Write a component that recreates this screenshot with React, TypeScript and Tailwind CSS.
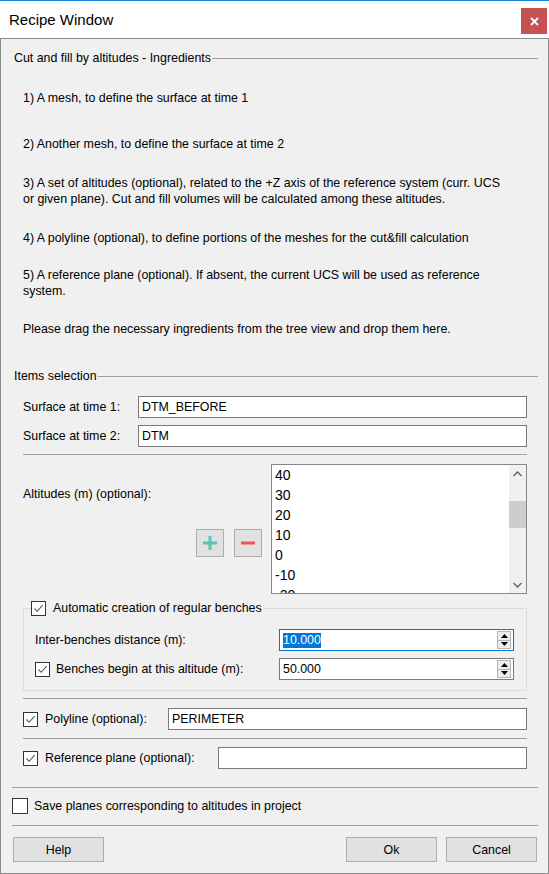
import React from "react";

function CheckBox({ big = false, checked = true }: { big?: boolean; checked?: boolean }) {
  return (
    <span
      className={
        big
          ? "inline-flex w-[16px] h-[16px] border border-[#333333] bg-white items-center justify-center shrink-0"
          : "inline-flex w-[15px] h-[15px] border border-[#333333] bg-white items-center justify-center shrink-0"
      }
    >
      {checked && (
        <svg width="11" height="11" viewBox="0 0 11 11">
          <path d="M1.5 5.5 L4.2 8.3 L9.6 2.2" fill="none" stroke="#555" strokeWidth="1.1" />
        </svg>
      )}
    </span>
  );
}

function Sep() {
  return <div className="h-px bg-[#a0a0a0]" />;
}

function TextInput({ value }: { value: string }) {
  return (
    <div className="flex-1 h-[22px] border border-[#7a7a7a] bg-white flex items-center pl-[3px] leading-[16px]">
      {value}
    </div>
  );
}

function SpinArrows() {
  return (
    <div className="flex flex-col w-[14px] h-[18px] mr-[2px]">
      <div className="flex-1 border border-[#b4b4b4] bg-[#ececec] flex items-center justify-center">
        <svg width="7" height="4" viewBox="0 0 7 4">
          <path d="M0 4 L3.5 0 L7 4 Z" fill="#000" />
        </svg>
      </div>
      <div className="flex-1 border border-t-0 border-[#b4b4b4] bg-[#ececec] flex items-center justify-center">
        <svg width="7" height="4" viewBox="0 0 7 4">
          <path d="M0 0 L3.5 4 L7 0 Z" fill="#000" />
        </svg>
      </div>
    </div>
  );
}

export default function App() {
  const altitudes = ["40", "30", "20", "10", "0", "-10", "-20"];
  return (
    <div className="w-[549px] h-[874px] bg-white border-t border-[#1883d7] flex flex-col font-['Liberation_Sans',Arial,sans-serif] text-black">
      {/* Title bar */}
      <div className="h-[37px] flex items-start justify-between">
        <div className="pl-[9px] pt-[9px] text-[15px] leading-[20px] text-[#000]">Recipe Window</div>
        <div className="mt-[7px] mr-[2px] w-[26px] h-[26px] bg-[#c75050] flex items-center justify-center">
          <svg width="9" height="9" viewBox="0 0 9 9">
            <path d="M1 1 L8 8 M8 1 L1 8" stroke="#fff" strokeWidth="1.8" />
          </svg>
        </div>
      </div>

      {/* Client area */}
      <div className="h-[836px] border border-[#8a8a8a] bg-[#f0f0f0] pl-[11px] pr-[10px] flex flex-col text-[12.4px] leading-[16px]">
        {/* Ingredients group title */}
        <div className="mt-[11px] pl-[2px] flex items-center h-[16px]">
          <span>Cut and fill by altitudes - Ingredients</span>
          <div className="flex-1 h-px bg-[#a0a0a0] ml-[1px]" />
        </div>
        <div className="pl-[11px] flex flex-col">
          <p className="mt-[24px]">1) A mesh, to define the surface at time 1</p>
          <p className="mt-[30px]">2) Another mesh, to define the surface at time 2</p>
          <p className="mt-[23px]">
            3) A set of altitudes (optional), related to the +Z axis of the reference system (curr. UCS
            <br />
            or given plane). Cut and fill volumes will be calculated among these altitudes.
          </p>
          <p className="mt-[23px]">4) A polyline (optional), to define portions of the meshes for the cut&amp;fill calculation</p>
          <p className="mt-[21px]">
            5) A reference plane (optional). If absent, the current UCS will be used as reference
            <br />
            system.
          </p>
          <p className="mt-[22px]">Please drag the necessary ingredients from the tree view and drop them here.</p>
        </div>

        {/* Items selection title */}
        <div className="mt-[31px] pl-[2px] flex items-center h-[16px]">
          <span>Items selection</span>
          <div className="flex-1 h-px bg-[#a0a0a0] ml-[1px]" />
        </div>

        <div className="pl-[11px] pr-[11px] flex flex-col">
          <div className="mt-[12px] flex items-center">
            <span className="w-[115px]">Surface at time 1:</span>
            <TextInput value="DTM_BEFORE" />
          </div>
          <div className="mt-[7px] flex items-center">
            <span className="w-[115px]">Surface at time 2:</span>
            <TextInput value="DTM" />
          </div>
          <div className="mt-[7px]">
            <Sep />
          </div>

          {/* Altitudes */}
          <div className="mt-[9px] flex h-[130px]">
            <div className="flex-1 flex flex-col">
              <span className="mt-[22px]">Altitudes (m) (optional):</span>
              <div className="mt-[27px] flex justify-end gap-[10px] pr-[9px]">
                <div className="w-[28px] h-[28px] border border-[#adadad] bg-[#e1e1e1] flex items-center justify-center">
                  <svg width="16" height="16" viewBox="0 0 16 16">
                    <path d="M8 1 V15 M1 8 H15" stroke="#5bc4b6" strokeWidth="3" />
                  </svg>
                </div>
                <div className="w-[28px] h-[28px] border border-[#adadad] bg-[#e1e1e1] flex items-center justify-center">
                  <svg width="14" height="4" viewBox="0 0 14 4">
                    <path d="M0 2 H14" stroke="#f05454" strokeWidth="3" />
                  </svg>
                </div>
              </div>
            </div>
            <div className="w-[256px] h-[130px] border border-[#828790] bg-white flex overflow-hidden">
              <div className="flex-1 flex flex-col pl-[3px] text-[14px] leading-[20px] overflow-hidden">
                {altitudes.map((a) => (
                  <div key={a} className="h-[20px] shrink-0">
                    {a}
                  </div>
                ))}
              </div>
              <div className="w-[17px] bg-[#f0f0f0] flex flex-col">
                <div className="h-[17px] flex items-center justify-center">
                  <svg width="9" height="6" viewBox="0 0 9 6">
                    <path d="M0.5 5 L4.5 1 L8.5 5" fill="none" stroke="#606060" strokeWidth="1.3" />
                  </svg>
                </div>
                <div className="mt-[19px] h-[27px] bg-[#cdcdcd]" />
                <div className="flex-1" />
                <div className="h-[17px] flex items-center justify-center">
                  <svg width="9" height="6" viewBox="0 0 9 6">
                    <path d="M0.5 1 L4.5 5 L8.5 1" fill="none" stroke="#606060" strokeWidth="1.3" />
                  </svg>
                </div>
              </div>
            </div>
          </div>

          {/* Benches group */}
          <fieldset className="mt-[6px] border border-[#dcdcdc]">
            <legend className="ml-[7px] pr-[2px] flex items-center gap-[7px] h-[16px]">
              <CheckBox />
              <span>Automatic creation of regular benches</span>
            </legend>
            <div className="pl-[11px] pr-[12px] pb-[10px] flex flex-col">
              <div className="mt-[13px] flex items-center">
                <span className="flex-1">Inter-benches distance (m):</span>
                <div className="w-[235px] h-[22px] border border-[#0078d7] bg-white flex items-center justify-between pl-[3px]">
                  <span className="bg-[#0078d7] text-white leading-[15px]">10.000</span>
                  <SpinArrows />
                </div>
              </div>
              <div className="mt-[7px] flex items-center">
                <div className="flex-1 flex items-center gap-[6px]">
                  <CheckBox />
                  <span>Benches begin at this altitude (m):</span>
                </div>
                <div className="w-[235px] h-[22px] border border-[#7a7a7a] bg-white flex items-center justify-between pl-[3px]">
                  <span>50.000</span>
                  <SpinArrows />
                </div>
              </div>
            </div>
          </fieldset>

          <div className="mt-[7px]">
            <Sep />
          </div>

          <div className="mt-[9px] flex items-center">
            <div className="w-[145px] flex items-center gap-[7px]">
              <CheckBox />
              <span>Polyline (optional):</span>
            </div>
            <TextInput value="PERIMETER" />
          </div>
          <div className="mt-[8px]">
            <Sep />
          </div>
          <div className="mt-[8px] flex items-center">
            <div className="w-[195px] flex items-center gap-[7px]">
              <CheckBox />
              <span>Reference plane (optional):</span>
            </div>
            <TextInput value="" />
          </div>
        </div>

        <div className="mt-[18px]">
          <Sep />
        </div>
        <div className="mt-[10px] flex items-center gap-[6px] h-[16px]">
          <CheckBox big checked={false} />
          <span>Save planes corresponding to altitudes in project</span>
        </div>
        <div className="mt-[11px]">
          <Sep />
        </div>

        <div className="mt-[11px] flex items-center justify-between px-[1px]">
          <div className="w-[91px] h-[25px] border border-[#adadad] bg-[#e1e1e1] flex items-center justify-center">Help</div>
          <div className="flex gap-[9px]">
            <div className="w-[91px] h-[25px] border border-[#adadad] bg-[#e1e1e1] flex items-center justify-center">Ok</div>
            <div className="w-[91px] h-[25px] border border-[#adadad] bg-[#e1e1e1] flex items-center justify-center">Cancel</div>
          </div>
        </div>
      </div>
    </div>
  );
}
